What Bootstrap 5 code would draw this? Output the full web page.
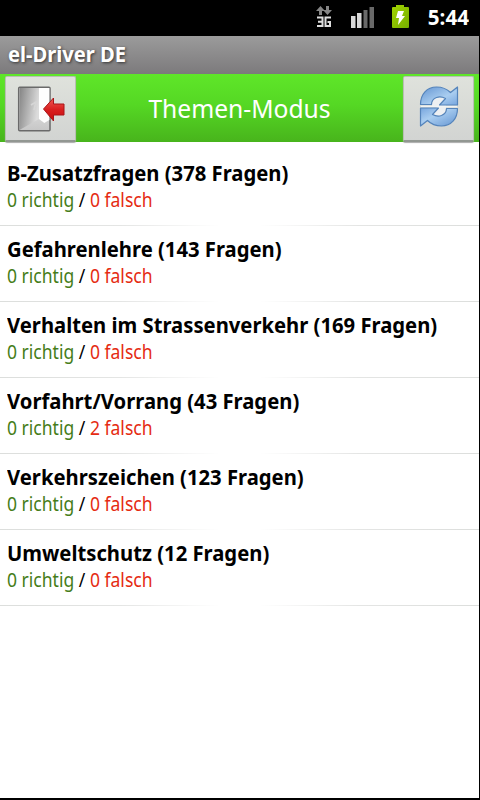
<!DOCTYPE html>
<html lang="de">
<head>
<meta charset="utf-8">
<meta name="viewport" content="width=device-width, initial-scale=1">
<title>el-Driver DE</title>
<link href="https://cdn.jsdelivr.net/npm/bootstrap@5.3.0/dist/css/bootstrap.min.css" rel="stylesheet">
<style>
body{background:#000;font-family:"Noto Sans","Open Sans",sans-serif;color:#000;overflow:hidden}
.screen{width:480px;height:800px;padding-bottom:2px}
.statusbar{height:36px;padding-right:11px}
.clock{font-size:21px;line-height:35px;margin-left:17px;transform:scaleX(.98);transform-origin:right}
.titlebar{height:38px;margin-right:1px;background:linear-gradient(#9b9b9b,#7c7a7c);padding-left:8px;font-size:21px;line-height:37px;text-shadow:1px 1px 3px #333}
.titlebar span{display:inline-block;transform:scaleX(.96);transform-origin:left}
.topbar{height:68px;margin-right:1px;background:linear-gradient(#5fe629,#55d824 45%,#48b41c);padding:0 5px;position:relative;z-index:1}
.tool{width:71px;height:66px;margin-top:2px;border:1px solid #b9beb4;border-bottom:2px solid #929792;border-radius:2px;background:linear-gradient(#dfe2dc,#d2d4d2);box-shadow:0 1px 1px #aaa}
.heading{font-size:25px;line-height:69px;transform:scaleX(.985)}
.topics{margin-right:1px;padding-top:8px;background:#fff}
.topic{height:76px;padding:8px 7px 0;background:linear-gradient(90deg,#dcdedc 0,#e4e5e4 25%,#fff 46%,#fff 54%,#e4e5e4 75%,#dcdedc) bottom/100% 1px no-repeat #fff}
.name{font-size:22px;line-height:28px;white-space:nowrap;transform:scaleX(.92);transform-origin:left}
.score{font-size:19px;line-height:28px;transform:scaleX(.923);transform-origin:left}
.right{color:#467d19}.wrong{color:#e52b12}
</style>
<script src="https://cdn.jsdelivr.net/npm/bootstrap@5.3.0/dist/js/bootstrap.bundle.min.js"></script>
</head>
<body>
<main class="screen d-flex flex-column">
<div class="statusbar d-flex justify-content-end text-white flex-shrink-0">
<svg width="100" height="36" viewBox="310 0 100 36" aria-hidden="true">
<path d="M316 11l4.500-5 4.500 5h-3v4h-3v-4zM326 6h3v4h3l-4.500 5-4.500-5h3z" fill="#858585"/>
<path d="M317 17.500h5.500v8.500H317M318 21.700h4.500M331 17.500h-5.500V26h4.500v-4h-2.500" fill="none" stroke="#dedede" stroke-width="2"/>
<path d="M351 16h4.500v12H351zM357 13h4.500v15H357z" fill="#d8d8d8"/><path d="M363.500 10h4v18h-4zM369.500 7h4.500v21h-4.500z" fill="#696969"/>
<defs><linearGradient id="bat" x2="1" y2="1"><stop stop-color="#a2d400"/><stop offset="1" stop-color="#75ae00"/></linearGradient></defs>
<path d="M396 5h8v2h4q1 0 1 1v19q0 1-1 1h-15q-1 0-1-1V8q0-1 1-1h3z" fill="url(#bat)"/><path d="M398 11h6l-2 5h3l-7 9 1-7h-3z" fill="#fff"/>
</svg>
<span class="clock fw-bold">5:44</span>
</div>
<div class="titlebar text-white fw-bold flex-shrink-0"><span>el-Driver DE</span></div>
<header class="topbar d-flex justify-content-between flex-shrink-0">
<button class="tool btn p-0 d-flex" aria-label="Zurück">
<svg width="69" height="63" viewBox="6 77 69 63">
<defs><linearGradient id="door" x2="1" y2=".3"><stop stop-color="#858585"/><stop offset="1" stop-color="#dcdcdc"/></linearGradient><linearGradient id="floor" x2="0" y2="1"><stop stop-color="#f4f4f4"/><stop offset="1" stop-color="#c6c6c6"/></linearGradient><linearGradient id="red" x2="0" y2="1"><stop stop-color="#f15a55"/><stop offset=".5" stop-color="#d92020"/><stop offset="1" stop-color="#c80c0c"/></linearGradient></defs>
<rect x="18.700" y="87.300" width="31.300" height="43.500" rx="1" fill="url(#floor)" stroke="#6a6a6a" stroke-width="1.500"/>
<path d="M39 88h10.300v32l-5 3-5.300-4z" fill="#fefefe"/><path d="M19.500 88H39v31l-19.500 11z" fill="url(#door)"/>
<path d="M31 105l5-3-2 8" fill="none" stroke="#d6d6d6" stroke-width="1.700"/>
<path d="M43.500 109l10-11v6H64v11H53.500v6z" fill="url(#red)" stroke="#a91518"/>
</svg></button>
<span class="heading text-white">Themen-Modus</span>
<button class="tool btn p-0 d-flex" aria-label="Neu laden">
<svg width="69" height="63" viewBox="404 77 69 63">
<defs><linearGradient id="blue" x2="1" y2="1"><stop stop-color="#6495d2"/><stop offset=".6" stop-color="#a9cdf0"/><stop offset="1" stop-color="#78a6de"/></linearGradient></defs>
<path d="M432 104q0-7 8-7l6 2-5 6h5v4q-2 8-10 7l-4-3 5-6h-5z" fill="#eef0f2"/><path d="M421 106.500h36" stroke="#f2f4f4" stroke-width="1.500"/>
<g fill="url(#blue)" stroke="#5584bb" stroke-width="1.200" stroke-linejoin="round"><path id="sweep" d="M420.500 104.500C420.500 94 427 87 436.500 87Q445 87 450.500 92.500L457.500 87V105H439.500L445.500 98.500Q441 96 436.500 97.500Q431.500 99.500 431.500 104.500Z"/><path d="M420.500 104.500C420.500 94 427 87 436.500 87Q445 87 450.500 92.500L457.500 87V105H439.500L445.500 98.500Q441 96 436.500 97.500Q431.500 99.500 431.500 104.500Z" transform="rotate(180 439 106.500)"/></g>
</svg></button>
</header>
<section class="topics list-group list-group-flush rounded-0 flex-grow-1">
<div class="topic"><div class="name fw-bold">B-Zusatzfragen (378 Fragen)</div><div class="score"><span class="right">0 richtig</span> / <span class="wrong">0 falsch</span></div></div>
<div class="topic"><div class="name fw-bold">Gefahrenlehre (143 Fragen)</div><div class="score"><span class="right">0 richtig</span> / <span class="wrong">0 falsch</span></div></div>
<div class="topic"><div class="name fw-bold">Verhalten im Strassenverkehr (169 Fragen)</div><div class="score"><span class="right">0 richtig</span> / <span class="wrong">0 falsch</span></div></div>
<div class="topic"><div class="name fw-bold">Vorfahrt/Vorrang (43 Fragen)</div><div class="score"><span class="right">0 richtig</span> / <span class="wrong">2 falsch</span></div></div>
<div class="topic"><div class="name fw-bold">Verkehrszeichen (123 Fragen)</div><div class="score"><span class="right">0 richtig</span> / <span class="wrong">0 falsch</span></div></div>
<div class="topic"><div class="name fw-bold">Umweltschutz (12 Fragen)</div><div class="score"><span class="right">0 richtig</span> / <span class="wrong">0 falsch</span></div></div>
</section>
</main>
</body>
</html>
